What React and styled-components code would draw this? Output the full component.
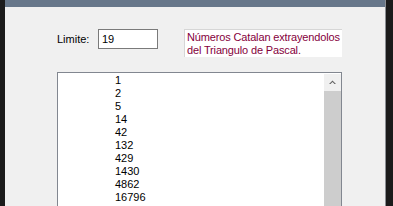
import React from 'react';
import styled, { createGlobalStyle } from 'styled-components';

const GlobalStyle = createGlobalStyle`
	html, body {
		margin: 0;
		padding: 0;
		overflow: hidden;
		background: #1b1b1b;
	}
	body {
		font-family: "Liberation Sans", Arial, sans-serif;
		font-size: 11px;
	}
`;

const Screen = styled.div`
	display: flex;
	box-sizing: border-box;
	width: 393px;
	height: 206px;
	padding-left: 5px;
	background: #1b1b1b;
	overflow: hidden;
`;

const Window = styled.div`
	box-sizing: border-box;
	width: 381px;
	height: 206px;
	display: flex;
	flex-direction: column;
	border-right: 1px solid #8c8f94;
	flex-shrink: 0;
`;

const TitleBar = styled.div`
	height: 7px;
	flex-shrink: 0;
	background: #67778a;
`;

const Panel = styled.div`
	flex: 1;
	min-height: 0;
	overflow: hidden;
	background: #f0f0f0;
	padding: 22px 0 0 52px;
	display: flex;
	flex-direction: column;
`;

const TopRow = styled.div`
	display: flex;
	align-items: flex-start;
	height: 43px;
	flex-shrink: 0;
`;

const Label = styled.span`
	margin-top: 4px;
	width: 41px;
	line-height: 13px;
	color: #000;
`;

const TextBox = styled.div`
	box-sizing: border-box;
	width: 60px;
	height: 20px;
	border: 1px solid #7a7a7a;
	background: #fff;
	padding: 3px 0 0 3px;
	line-height: 13px;
	color: #000;
`;

const InfoBox = styled.div`
	box-sizing: border-box;
	margin-left: 26px;
	width: 158px;
	height: 28px;
	background: #fff;
	border-top: 1px solid #d6d6d6;
	border-left: 1px solid #d6d6d6;
	padding: 1px 0 0 2px;
	line-height: 13px;
	white-space: nowrap;
	overflow: hidden;
	letter-spacing: -0.15px;
	color: #85003c;
`;

const ListBox = styled.div`
	box-sizing: border-box;
	width: 285px;
	flex: 1;
	border: 1px solid #828790;
	border-bottom: none;
	background: #fff;
	display: flex;
	overflow: hidden;
`;

const Items = styled.div`
	flex: 1;
	padding: 1px 0 0 57px;
`;

const Item = styled.div`
	line-height: 13px;
	height: 13px;
	color: #000;
`;

const ScrollBar = styled.div`
	width: 17px;
	margin-top: 1px;
	display: flex;
	flex-direction: column;
`;

const ScrollButton = styled.div`
	height: 17px;
	background: #f0f0f0;
	display: flex;
	align-items: center;
	justify-content: center;
`;

const ScrollTrack = styled.div`
	flex: 1;
	background: #cdcdcd;
`;

const catalan = [1, 2, 5, 14, 42, 132, 429, 1430, 4862, 16796];

export default function App() {
	return (
		<Screen>
			<GlobalStyle />
			<Window>
				<TitleBar />
				<Panel>
					<TopRow>
						<Label>Limite:</Label>
						<TextBox>19</TextBox>
						<InfoBox>
							Números Catalan extrayendolos
							<br />
							del Triangulo de Pascal.
						</InfoBox>
					</TopRow>
					<ListBox>
						<Items>
							{catalan.map((n) => (
								<Item key={n}>{n}</Item>
							))}
						</Items>
						<ScrollBar>
							<ScrollButton>
								<svg width="7" height="5" viewBox="0 0 7 5">
									<path d="M0 4 L3.5 0.5 L7 4 L5.5 4 L3.5 2 L1.5 4 Z" fill="#606060" />
								</svg>
							</ScrollButton>
							<ScrollTrack />
						</ScrollBar>
					</ListBox>
				</Panel>
			</Window>
		</Screen>
	);
}
